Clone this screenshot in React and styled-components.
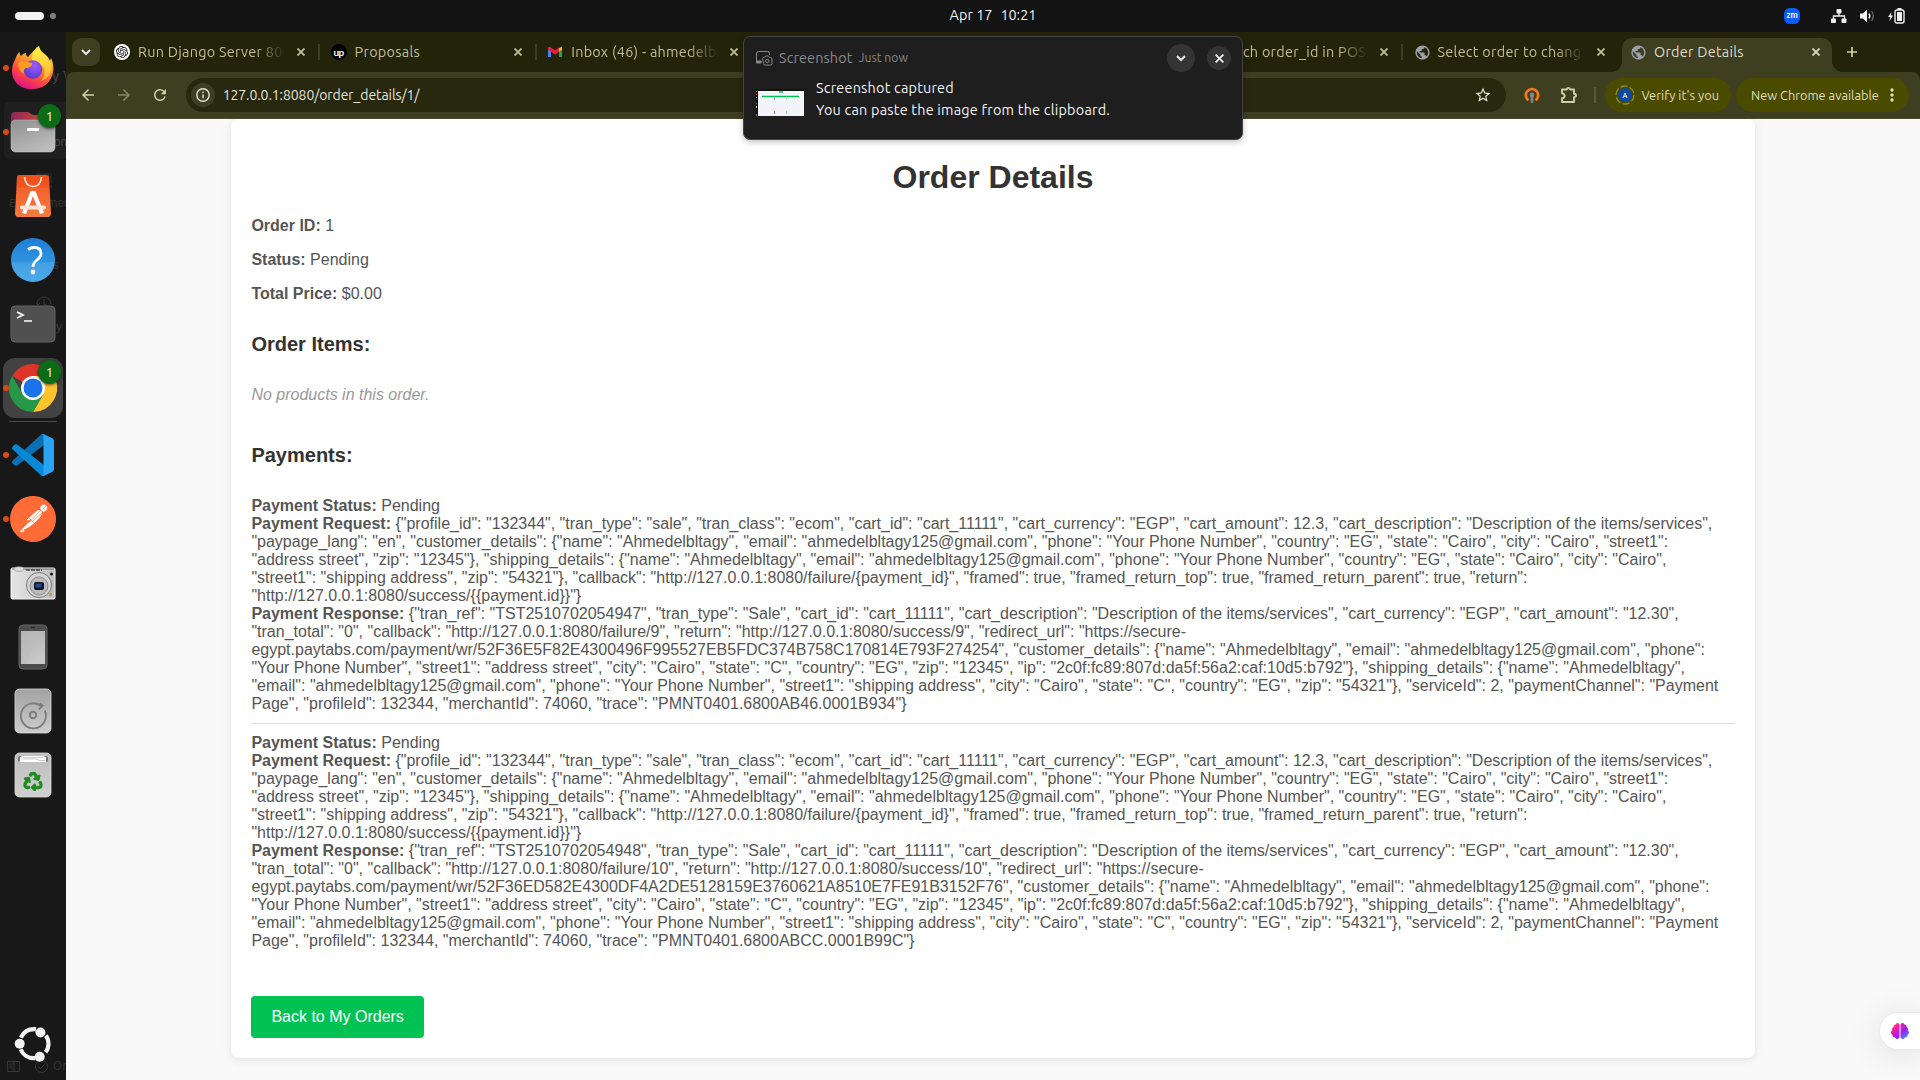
import React from 'react';
import styled, { createGlobalStyle, css } from 'styled-components';
import { MdPublic, MdStarBorder, MdArrowBack, MdArrowForward, MdRefresh } from 'react-icons/md';
import { SiOpenai, SiPostman } from 'react-icons/si';
import { FaRecycle, FaBrain } from 'react-icons/fa';

const uiFont = 'Ubuntu, "Noto Sans", "Open Sans", sans-serif';

const GlobalStyle = createGlobalStyle`
  * { box-sizing: border-box; }
  body { margin: 0; background: #131313; overflow: hidden; }
  svg { display: block; flex: none; }
`;

const Desktop = styled.div`
  position: relative;
  display: flex;
  flex-direction: column;
  width: 1920px;
  height: 1080px;
  overflow: hidden;
  font-family: ${uiFont};
`;

const Label = styled.span`
  white-space: pre;
  font-size: ${(p) => p.$size || 14.4}px;
  letter-spacing: ${(p) => p.$track || 0}px;
  line-height: 20px;
`;

/* ---------- top bar ---------- */
const TopBar = styled.header`
  display: grid;
  grid-template-columns: 1fr auto 1fr;
  align-items: center;
  height: 32px;
  flex: none;
  padding: 0 15px;
  background: #131313;
  color: #f2f2f2;
`;
const Workspaces = styled.div`
  display: flex;
  align-items: center;
  gap: 6px;
`;
const WorkspacePill = styled.span`
  width: ${(p) => (p.$active ? 29 : 6)}px;
  height: ${(p) => (p.$active ? 8 : 6)}px;
  border-radius: 4px;
  background: ${(p) => (p.$active ? '#f2f2f2' : '#808080')};
`;
const Clock = styled.div`
  display: flex;
  gap: 8px;
  margin-left: 66px;
  margin-top: -2px;
`;
const Tray = styled.div`
  display: flex;
  justify-content: flex-end;
  align-items: center;
  gap: 13px;
`;
const ZoomBadge = styled.span`
  display: grid;
  place-items: center;
  width: 16px;
  height: 16px;
  margin-right: 18px;
  border-radius: 6px;
  background: #0b5cff;
  color: #fff;
  font: 700 8.5px/1 Lato, sans-serif;
  padding-bottom: 1px;
`;

/* ---------- dock ---------- */
const Body = styled.div`
  display: flex;
  flex: 1;
  min-height: 0;
`;
const DockBar = styled.nav`
  position: relative;
  display: flex;
  flex-direction: column;
  width: 66px;
  flex: none;
  padding: 6px 0 2px;
  background: #181818;
  overflow: hidden;
`;
const DockItem = styled.div`
  position: relative;
  display: grid;
  place-items: center;
  width: 60px;
  height: 60px;
  margin: 0 3px 4px;
  flex: none;
  border-radius: 12px;
  ${(p) => p.$active && css`background: #424242;`}
`;
const RunDot = styled.i`
  position: absolute;
  left: 0;
  top: 27px;
  width: 6px;
  height: 6px;
  border-radius: 50%;
  background: #d64a17;
`;
const CountBadge = styled.span`
  position: absolute;
  left: 35px;
  top: 2px;
  display: grid;
  place-items: center;
  width: 23px;
  height: 24px;
  border-radius: 50%;
  background: #0d6b18;
  box-shadow: 0 1px 3px rgba(0, 0, 0, 0.6);
  color: #fff;
  font: 13px/1 ${uiFont};
`;
const DockRule = styled.hr`
  width: 48px;
  height: 1px;
  margin: -1px 0 3px 9px;
  border: 0;
  flex: none;
  background: #4a4a4a;
`;
const DockSpacer = styled.div`
  flex: 1;
`;
const Ghost = styled.span`
  position: absolute;
  left: ${(p) => p.$x}px;
  top: ${(p) => p.$y}px;
  color: ${(p) => p.$tone || '#333'};
  font: ${(p) => p.$size || 11}px/1.2 Inter, sans-serif;
  white-space: nowrap;
`;
const GhostPanel = styled.div`
  position: absolute;
  left: 4px;
  top: 70px;
  width: 66px;
  height: 57px;
  border-radius: 5px;
  background: #1f1f1f;
`;

/* ---------- browser ---------- */
const Browser = styled.main`
  display: flex;
  flex-direction: column;
  flex: 1;
  min-width: 0;
  background: #23230a;
`;
const TabStrip = styled.div`
  display: flex;
  height: 40px;
  flex: none;
  align-items: flex-end;
  padding-left: 6px;
`;
const TabSearch = styled.div`
  display: grid;
  place-items: center;
  width: 28px;
  height: 28px;
  margin: 0 4px 6px 0;
  border-radius: 9px;
  background: #3e3e21;
`;
const Tab = styled.div`
  position: relative;
  display: flex;
  align-items: center;
  width: ${(p) => (p.$active ? 210 : 216.6)}px;
  height: 34px;
  flex: none;
  margin-left: ${(p) => (p.$active ? 1.8 : 0)}px;
  padding: 0 0 6px ${(p) => (p.$active ? 8 : 10)}px;
  color: ${(p) => (p.$active ? '#dcdcc8' : '#bfbf96')};
  ${(p) =>
    p.$active &&
    css`
      background: #3e3e21;
      border-radius: 10px 10px 0 0;
      &::before,
      &::after {
        content: '';
        position: absolute;
        bottom: 0;
        width: 10px;
        height: 10px;
      }
      &::before {
        left: -10px;
        background: radial-gradient(circle at 0 0, transparent 9.5px, #3e3e21 10px);
      }
      &::after {
        right: -10px;
        background: radial-gradient(circle at 100% 0, transparent 9.5px, #3e3e21 10px);
      }
    `}
`;
const TabTitle = styled.div`
  width: 147px;
  margin-left: 8px;
  margin-right: ${(p) => (p.$tight ? 11 : 12)}px;
  overflow: hidden;
  display: flex;
  ${(p) => p.$fade && css`mask-image: linear-gradient(90deg, #000 118px, transparent 147px);`}
`;
const TabRule = styled.i`
  width: 2px;
  height: 16px;
  margin-left: 13px;
  background: #3e3e21;
`;
const FavIcon = styled.span`
  display: grid;
  place-items: center;
  width: 16px;
  height: 16px;
  flex: none;
  border-radius: 50%;
  background: ${(p) => p.$bg || 'transparent'};
  color: ${(p) => p.$fg || '#9aa0a6'};
  font: 700 10px/1 Lato, sans-serif;
  letter-spacing: -0.5px;
`;
const NewTab = styled.div`
  margin: 0 0 14px 14px;
`;
const Toolbar = styled.div`
  display: flex;
  align-items: center;
  height: 47px;
  flex: none;
  padding: 0 6px 1px 13px;
  border-radius: 8px 8px 0 0;
  border-bottom: 1px solid #4a4a31;
  background: #3e3e21;
  color: #cfcfa6;
`;
const NavButton = styled.span`
  display: grid;
  place-items: center;
  width: 36px;
  margin-left: ${(p) => p.$ml || 0}px;
  opacity: ${(p) => (p.$off ? 0.5 : 1)};
`;
const Omnibox = styled.div`
  display: flex;
  align-items: center;
  width: 1325px;
  height: 34px;
  margin-left: 8px;
  padding: 0 14px 0 5px;
  border-radius: 17px;
  background: #28280f;
  color: #e4e4da;
`;
const SiteInfo = styled.span`
  display: grid;
  place-items: center;
  width: 24px;
  height: 24px;
  margin-right: 8px;
  border-radius: 50%;
  background: #3e3e21;
`;
const Grow = styled.span`
  flex: 1;
`;
const ToolIcon = styled.span`
  margin-left: ${(p) => p.$ml}px;
`;
const ToolRule = styled.i`
  width: 2px;
  height: 16px;
  margin: 0 9px 0 16px;
  background: #5a5a38;
`;
const Chip = styled.div`
  display: flex;
  align-items: center;
  justify-content: space-between;
  width: ${(p) => p.$w}px;
  height: 34px;
  flex: none;
  padding: ${(p) => p.$pad};
  margin-right: 5px;
  border-radius: 17px;
  background: #4b4b00;
  color: #dedeba;
`;

/* ---------- web page ---------- */
const Page = styled.section`
  flex: 1;
  min-height: 0;
  padding: 0 165.4px;
  background: #f9f9f9;
  font-family: Arial, "Liberation Sans", sans-serif;
  font-size: 16px;
  color: #555;
`;
const Card = styled.article`
  height: 939px;
  padding: 20px;
  border-radius: 8px;
  background: #fff;
  box-shadow: 0 2px 10px rgba(0, 0, 0, 0.1);
`;
const Title = styled.h1`
  margin: 20px 0 21px;
  font-size: 32px;
  line-height: 37px;
  text-align: center;
  color: #333;
`;
const Heading = styled.h2`
  margin: 30px 0 20px;
  font-size: 20px;
  line-height: 23px;
  color: #333;
`;
const Field = styled.p`
  margin: 0 0 16px;
  line-height: 18px;
`;
const List = styled.ul`
  margin: 0;
  padding: 0;
  list-style: none;
  line-height: 18px;
`;
const Row = styled.li`
  padding: 10px 0;
  border-bottom: 1px solid #ddd;
  &:last-child { border-bottom: 0; }
`;
const Empty = styled(Row)`
  font-style: italic;
  color: #999;
`;
const BackButton = styled.a`
  display: inline-block;
  margin-top: 36px;
  padding: 12px 20px;
  border-radius: 4px;
  background: #00c253;
  color: #fff;
  line-height: 18px;
`;

/* ---------- overlays ---------- */
const Notification = styled.aside`
  position: absolute;
  left: 743px;
  top: 36px;
  width: 500px;
  height: 104px;
  padding: 7px 11px 0 12px;
  border: 1px solid #444;
  border-radius: 7px;
  background: #1e1e1e;
  box-shadow: 0 2px 6px rgba(0, 0, 0, 0.25);
  color: #f2f2f2;
`;
const NoteHeader = styled.div`
  display: flex;
  align-items: center;
  height: 28px;
  gap: 6px;
  color: #8a8a8a;
`;
const RoundButton = styled.span`
  display: grid;
  place-items: center;
  width: ${(p) => p.$d}px;
  height: ${(p) => p.$d}px;
  border-radius: 50%;
  background: #343434;
  color: #f2f2f2;
  margin-left: 6px;
`;
const NoteBody = styled.div`
  display: flex;
  gap: 12px;
  margin-top: 6px;
`;
const NoteText = styled.div`
  display: flex;
  flex-direction: column;
  gap: 2px;
`;
const Thumb = styled.div`
  margin-top: 11px;
`;
const Assistant = styled.div`
  position: absolute;
  right: 0;
  top: 1013px;
  display: flex;
  align-items: center;
  width: 40px;
  height: 36px;
  padding-left: 11px;
  border-radius: 18px 0 0 18px;
  background: #fff;
  box-shadow: 0 4px 34px rgba(0, 0, 0, 0.12), 0 0 2px rgba(0, 0, 0, 0.08);
`;

/* ---------- drawings ---------- */
const Close = ({ size = 8, w = 1.8 }) => (
  <svg width={size} height={size} viewBox="0 0 8 8" stroke="currentColor" strokeWidth={w} fill="none">
    <path d="M0.5 0.5 7.5 7.5M7.5 0.5 0.5 7.5" />
  </svg>
);
const Chevron = ({ size = 10 }) => (
  <svg width={size} height={size} viewBox="0 0 10 10" stroke="#e8e8e0" strokeWidth="2" fill="none">
    <path d="M1 3 5 7 9 3" />
  </svg>
);
const Puzzle = () => (
  <svg width="18" height="18" viewBox="0 0 18 18" fill="none" stroke="currentColor" strokeWidth="1.900" strokeLinejoin="round">
    <path d="M2 3.500h4.800q.2-1.600 1.600-1.600t1.600 1.600h4v4.200q2 .2 2 1.700t-2 1.700v4.900H2v-3.700q2.600-.3 2.600-2.400T2 7.300z" />
  </svg>
);
const Firefox = () => (
  <svg width="44" height="46" viewBox="0 0 44 46">
    <defs>
      <linearGradient id="ffBody" x1="0.8" y1="0" x2="0.3" y2="1">
        <stop offset="0" stopColor="#fff04a" />
        <stop offset="0.35" stopColor="#ffa62b" />
        <stop offset="0.68" stopColor="#ff4a3f" />
        <stop offset="1" stopColor="#e0108a" />
      </linearGradient>
      <radialGradient id="ffCore" cx="0.6" cy="0.3" r="0.8">
        <stop offset="0" stopColor="#a259ff" />
        <stop offset="1" stopColor="#4a36c9" />
      </radialGradient>
      <linearGradient id="ffFlame" x1="0.5" y1="0" x2="0.5" y2="1">
        <stop offset="0" stopColor="#fff44f" />
        <stop offset="1" stopColor="#ffb02e" />
      </linearGradient>
    </defs>
    <path d="M4 15c1-4 3-7 4.500-8 0 2 .5 3 1.500 4 2-2 3-3 5-3 0 2 .5 3 2 4l9-10c4 6 10 6 13 14l1-3c3 6 3 13 1 18-3 8-10 13-19 13C10 45 1 37 1 26c0-4 1-8 3-11z" fill="url(#ffBody)" />
    <path d="M28 1c-5 4-7 8-7 14l10 5c4 5 3 12-1 16 7-2 11-9 10-16-1-8-10-10-12-19z" fill="url(#ffFlame)" />
    <circle cx="22" cy="24.500" r="9.300" fill="url(#ffCore)" />
    <path d="M7 18c5-3 9-1 14 0 1 3-3 5-6 5-2 1-3 3-2 6-4-2-6-6-6-11z" fill="#ff9b22" />
    <path d="M25 15c4 0 7 3 8 7l-3-2c-1-2-3-4-5-5z" fill="#ffd23a" />
  </svg>
);
const Files = () => (
  <svg width="46" height="42" viewBox="0 0 46 42">
    <defs>
      <linearGradient id="fileTop"><stop stopColor="#8b2757" /><stop offset="1" stopColor="#e0512b" /></linearGradient>
      <linearGradient id="fileFront" x2="0.6" y2="1"><stop stopColor="#8f8f8f" /><stop offset="1" stopColor="#bcbcbc" /></linearGradient>
    </defs>
    <path d="M1 5q0-4 4-4h13l5 3h18q4 0 4 4v10H1z" fill="url(#fileTop)" />
    <rect x="1" y="9" width="44" height="32" rx="4.500" fill="url(#fileFront)" stroke="#c8c8c8" strokeWidth="0.500" />
    <rect x="17" y="17" width="12" height="3" rx="1.200" fill="#fff" />
  </svg>
);
const Store = () => (
  <svg width="38" height="44" viewBox="0 0 38 44">
    <defs><linearGradient id="bag" x2="0" y2="1"><stop stopColor="#f4511e" /><stop offset="0.3" stopColor="#f4622c" /><stop offset="1" stopColor="#f47b40" /></linearGradient></defs>
    <path d="M3 4q0-3 3-3h26q3 0 3 3l2 35q0 4-3 4H4q-3 0-3-4z" fill="url(#bag)" />
    <path d="M3 1.500h32l.5 12h-33z" fill="#ef4d17" opacity="0.600" />
    <path d="M10.500 3q1 9.500 8.500 9.500T27.500 3" fill="none" stroke="#ffe9df" strokeWidth="1.700" />
    <path d="M10 39.500 18 19h2l8 20.500" fill="none" stroke="#fff" strokeWidth="4.200" />
    <path d="M8 33.500h22" stroke="#ffe3d6" strokeWidth="4" strokeLinecap="round" />
  </svg>
);
const Help = () => (
  <svg width="46" height="46" viewBox="0 0 46 46">
    <defs><linearGradient id="help" x2="0" y2="1"><stop stopColor="#1c7ed6" /><stop offset="0.55" stopColor="#2f94df" /><stop offset="0.56" stopColor="#429fe2" /><stop offset="1" stopColor="#4fabe8" /></linearGradient></defs>
    <circle cx="23" cy="23" r="22" fill="url(#help)" />
    <path d="M18 12.500q3-2 6-2 7 0 7 6 0 3.500-4 6.500-4 3-4 7" fill="none" stroke="#fff" strokeWidth="2.800" />
    <circle cx="23" cy="35" r="2.400" fill="#fff" />
  </svg>
);
const Terminal = () => (
  <svg width="46" height="38" viewBox="0 0 46 38">
    <rect x="1" y="1" width="44" height="36" rx="4" fill="#505050" stroke="#626262" />
    <path d="M7 7l6 3-6 3" fill="none" stroke="#fff" strokeWidth="1.700" />
    <path d="M14 16h8" stroke="#fff" strokeWidth="1.500" />
  </svg>
);
const ChromeLogo = () => (
  <svg width="48" height="48" viewBox="0 0 48 48">
    <path d="M24 12h20.800A24 24 0 0 1 24 48l10.400-18z" fill="#fcc32c" />
    <path d="M3.200 12A24 24 0 0 1 44.800 12H24L13.600 18z" fill="#e0342a" />
    <path d="M3.200 12 13.600 30 24 36l10.400-6L24 48A24 24 0 0 1 3.200 12z" fill="#279847" />
    <circle cx="24" cy="24" r="12" fill="#fff" />
    <circle cx="24" cy="24" r="9.500" fill="#1a73e8" />
  </svg>
);
const VsCode = () => (
  <svg width="42" height="42" viewBox="0 0 100 100">
    <path d="M96.460 10.800 75.860.880C73.470-.270 70.620.210 68.750 2.080L1.300 63.580c-1.810 1.650-1.810 4.510 0 6.170l5.510 5c1.490 1.350 3.720 1.450 5.320.240L93.360 13.370C96.090 11.300 100 13.250 100 16.670z" fill="#0b6fb3" />
    <path d="M96.460 89.200 75.860 99.120c-2.390 1.150-5.240.670-7.110-1.200L1.300 36.420c-1.810-1.660-1.810-4.520 0-6.170l5.510-5c1.490-1.350 3.720-1.450 5.320-.240l81.230 61.620c2.730 2.070 6.640.120 6.640-3.300z" fill="#0a88d8" />
    <path d="M75.860 99.130c-2.390 1.140-5.240.660-7.110-1.210 2.310 2.300 6.250.670 6.250-2.590V4.670c0-3.260-3.940-4.890-6.250-2.590 1.870-1.870 4.720-2.360 7.110-1.210l20.600 9.910c2.160 1.040 3.540 3.230 3.540 5.630v67.180c0 2.400-1.380 4.590-3.540 5.630z" fill="#27a5f4" />
  </svg>
);
const PostmanWrap = styled.span`
  display: grid;
  place-items: center;
  width: 46px;
  height: 46px;
  border-radius: 50%;
  background: radial-gradient(circle, #fff 60%, transparent 61%);
`;
const Camera = () => (
  <svg width="46" height="34" viewBox="0 0 46 34">
    <defs><linearGradient id="cam"><stop stopColor="#e6e6e6" /><stop offset="1" stopColor="#bdbdbd" /></linearGradient></defs>
    <rect x="1" y="2" width="44" height="31" rx="1.500" fill="url(#cam)" stroke="#f5f5f5" />
    <path d="M2 3h42" stroke="#777" />
    <ellipse cx="9" cy="3" rx="5" ry="2.300" fill="#ddd" stroke="#888" strokeWidth="0.600" />
    <path d="M16 4h16" stroke="#444" strokeWidth="1.500" strokeDasharray="4 1" />
    <circle cx="29" cy="19" r="12.500" fill="#d6d6d6" stroke="#777" />
    <circle cx="29" cy="20" r="9" fill="#bbb" stroke="#888" />
    <rect x="24" y="16" width="10" height="8" rx="2" fill="#0b1220" />
    <rect x="25.500" y="17.500" width="6" height="4" fill="#1f4c8f" />
    <circle cx="41.500" cy="8" r="1.600" fill="#222" />
    <rect x="39" y="27" width="3" height="3" fill="#e6951e" />
  </svg>
);
const Phone = () => (
  <svg width="30" height="46" viewBox="0 0 30 46">
    <defs><linearGradient id="screen" x2="0.4" y2="1"><stop stopColor="#b0b0b0" /><stop offset="1" stopColor="#c8c8c8" /></linearGradient></defs>
    <rect x="1" y="1" width="28" height="44" rx="4" fill="#4c4c4c" stroke="#666" />
    <rect x="3" y="7" width="24" height="33" fill="url(#screen)" />
    <path d="M22 7 8 40H3V7z" fill="#bcbcbc" opacity="0.500" />
    <path d="M13 3.500h4" stroke="#222" />
  </svg>
);
const Disk = () => (
  <svg width="38" height="46" viewBox="0 0 38 46">
    <defs><linearGradient id="disk" x2="0" y2="1"><stop stopColor="#a2a2a2" /><stop offset="1" stopColor="#cdcdcd" /></linearGradient></defs>
    <rect x="1" y="1" width="36" height="44" rx="4.500" fill="url(#disk)" stroke="#dadada" strokeWidth="0.800" />
    <path d="M27.500 18.300A12.500 12.500 0 1 0 30.700 22.500M24.800 21.300l4-3.800-3-2.200" fill="none" stroke="#7c7c7c" strokeWidth="1.800" />
    <circle cx="19" cy="27" r="3.200" fill="none" stroke="#7c7c7c" strokeWidth="1.900" />
  </svg>
);
const Trash = () => (
  <svg width="38" height="46" viewBox="0 0 38 46">
    <defs><linearGradient id="bin" x2="0" y2="1"><stop stopColor="#bdbdbd" /><stop offset="1" stopColor="#d0d0d0" /></linearGradient></defs>
    <rect x="1" y="1" width="36" height="44" rx="4.500" fill="url(#bin)" stroke="#dadada" strokeWidth="0.800" />
    <path d="M4 9.500V6q0-2 2-2h26q2 0 2 2v3.500z" fill="#777" />
    <path d="M6 10V5l3-1h20l3 1v5z" fill="#fff" />
    <path d="M8 7h14l4 1.500h6M9 5.500h20" fill="none" stroke="#aaa" strokeWidth="0.600" />
    <FaRecycle x="9.500" y="20" size="19" color="#1f8a1f" strokeWidth="28" />
  </svg>
);
const UbuntuLogo = () => (
  <svg width="38" height="38" viewBox="0 0 38 38" fill="#f2f2f2">
    <circle cx="20" cy="18.700" r="14.500" fill="none" stroke="#f2f2f2" strokeWidth="4.200" strokeDasharray="18.500 11.870" strokeDashoffset="9.250" />
    <circle cx="5.700" cy="18.700" r="5" />
    <circle cx="26.500" cy="7.500" r="5" />
    <circle cx="25.700" cy="31.700" r="5" />
  </svg>
);
const Gmail = () => (
  <svg width="16" height="12" viewBox="0 0 16 12">
    <path d="M1 1.500V11h3V5z" fill="#4285f4" />
    <path d="M15 1.500V11h-3V5z" fill="#22a352" />
    <path d="M12 2.200 15 .6V3.500l-3 2.300z" fill="#fbbc04" />
    <path d="M1 1.200Q2.500 0 4 1.500l4 3 4-3v4.300l-4 3-4-3-3-2.300z" fill="#ea2035" />
  </svg>
);
const InfoIcon = () => (
  <svg width="14" height="14" viewBox="0 0 14 14" fill="none" stroke="currentColor" strokeWidth="1.400">
    <circle cx="7" cy="7" r="6.200" />
    <path d="M7 6.300v4M7 3.600v1.500" />
  </svg>
);
const VpnIcon = () => (
  <svg width="16" height="16" viewBox="0 0 16 16">
    <path d="M4.500 13.300A6.200 6.200 0 1 1 11.500 13.300" fill="none" stroke="#f47a1c" strokeWidth="2.700" />
    <circle cx="8" cy="8" r="2.400" fill="#858585" />
    <path d="M8 8v8" stroke="#858585" strokeWidth="2.600" />
  </svg>
);
const ProfileIcon = () => (
  <svg width="20" height="20" viewBox="0 0 20 20">
    <circle cx="10" cy="10" r="9" fill="none" stroke="#8c8c35" strokeWidth="1.300" strokeDasharray="7 2.400" />
    <circle cx="10" cy="10" r="7" fill="#0b4a9e" />
    <text x="10" y="12.700" textAnchor="middle" fontSize="7.500" fill="#fff" fontFamily="Noto Sans, sans-serif">A</text>
  </svg>
);
const Dots = () => (
  <svg width="4" height="14" viewBox="0 0 4 14" fill="currentColor">
    <circle cx="2" cy="2" r="1.700" /><circle cx="2" cy="7" r="1.700" /><circle cx="2" cy="12" r="1.700" />
  </svg>
);
const Network = () => (
  <svg width="16" height="14" viewBox="0 0 16 14" fill="#f2f2f2">
    <rect x="5.500" y="0" width="5" height="4.500" rx="1" /><rect x="0" y="9.500" width="5" height="4.500" rx="1" /><rect x="10.500" y="9.500" width="5" height="4.500" rx="1" />
    <path d="M8 4v3M2.500 10V7h11v3" fill="none" stroke="#f2f2f2" strokeWidth="1.300" />
  </svg>
);
const Volume = () => (
  <svg width="15" height="14" viewBox="0 0 15 14">
    <path d="M0 4.500h3L7 .5v13L3 9.500H0z" fill="#f2f2f2" />
    <path d="M8.800 4.500q2 2.500 0 5" fill="none" stroke="#f2f2f2" strokeWidth="1.400" />
    <path d="M11.500 2q3.500 5 0 10" fill="none" stroke="#6a6a6a" strokeWidth="1.300" />
  </svg>
);
const Battery = () => (
  <svg width="17" height="16" viewBox="0 0 17 16">
    <path d="M3.500 4 0 9h2.200L1.500 13 5 7.500H2.800z" fill="#f2f2f2" />
    <rect x="7" y="2" width="9" height="13" rx="2" fill="none" stroke="#f2f2f2" strokeWidth="1.400" />
    <rect x="9" y="4" width="5" height="9" fill="#f2f2f2" /><rect x="9.500" y="0" width="4" height="2" fill="#f2f2f2" />
  </svg>
);
const ShotIcon = () => (
  <svg width="17" height="15" viewBox="0 0 17 15" fill="none" stroke="#8a8a8a">
    <path d="M5 11.500H.500V2.500q0-2 2-2h9q2 0 2 2V4" />
    <path d="M.5 10h4.500v2H.500z" fill="#8a8a8a" />
    <path d="M6.500 7.500q0-1 1-1h1l1-1.500h3l1 1.500h1q1.500 0 1.500 1.500v4.500q0 1.500-1.500 1.500h-6q-1 0-1-1.500z" fill="#1e1e1e" />
    <circle cx="11.300" cy="10" r="1.700" />
  </svg>
);
const ShotThumb = () => (
  <svg width="48" height="27" viewBox="0 0 48 27">
    <rect width="48" height="3" fill="#15150a" />
    <rect x="2" y="2" width="46" height="25" fill="#f3f3fa" />
    <rect width="2" height="27" fill="#111" />
    <path d="M.5 2v1M.500 5v1M.500 14v1" stroke="#e0522b" />
    <path d="M.5 8v1M.500 17v2M.500 25.500v1" stroke="#ccc" />
    <path d="M23 3h4M6 7.500h37" stroke="#00c253" strokeWidth="1.400" />
    <path d="M18.500 9v1.500M18.500 22v3" stroke="#999" /><path d="M30.500 9v1.500M30.500 22v3" stroke="#93dfb0" />
  </svg>
);
const Brain = () => (
  <>
    <svg width="0" height="0">
      <defs>
        <linearGradient id="brainFill" x1="0" y1="0" x2="1" y2="1">
          <stop offset="0" stopColor="#ff9a2e" /><stop offset="0.25" stopColor="#ff1f9c" />
          <stop offset="0.6" stopColor="#9a1ff0" /><stop offset="1" stopColor="#22b4ff" />
        </linearGradient>
      </defs>
    </svg>
    <FaBrain size={18} fill="url(#brainFill)" />
  </>
);

/* ---------- data ---------- */
const customer = '"Ahmedelbltagy", "email": "ahmedelbltagy125@gmail.com", "phone": "Your Phone Number"';
const request =
  `{"profile_id": "132344", "tran_type": "sale", "tran_class": "ecom", "cart_id": "cart_11111", "cart_currency": "EGP", "cart_amount": 12.3, "cart_description": "Description of the items/services", "paypage_lang": "en", "customer_details": {"name": ${customer}, "country": "EG", "state": "Cairo", "city": "Cairo", "street1": "address street", "zip": "12345"}, "shipping_details": {"name": ${customer}, "country": "EG", "state": "Cairo", "city": "Cairo", "street1": "shipping address", "zip": "54321"}, "callback": "http://127.0.0.1:8080/failure/{payment_id}", "framed": true, "framed_return_top": true, "framed_return_parent": true, "return": "http://127.0.0.1:8080/success/{{payment.id}}"}`;
const response = ({ ref, id, token, trace }) =>
  `{"tran_ref": "${ref}", "tran_type": "Sale", "cart_id": "cart_11111", "cart_description": "Description of the items/services", "cart_currency": "EGP", "cart_amount": "12.30", "tran_total": "0", "callback": "http://127.0.0.1:8080/failure/${id}", "return": "http://127.0.0.1:8080/success/${id}", "redirect_url": "https://secure-egypt.paytabs.com/payment/wr/${token}", "customer_details": {"name": ${customer}, "street1": "address street", "city": "Cairo", "state": "C", "country": "EG", "zip": "12345", "ip": "2c0f:fc89:807d:da5f:56a2:caf:10d5:b792"}, "shipping_details": {"name": ${customer}, "street1": "shipping address", "city": "Cairo", "state": "C", "country": "EG", "zip": "54321"}, "serviceId": 2, "paymentChannel": "Payment Page", "profileId": 132344, "merchantId": 74060, "trace": "${trace}"}`;
const payments = [
  { ref: 'TST2510702054947', id: 9, token: '52F36E5F82E4300496F995527EB5FDC374B758C170814E793F274254', trace: 'PMNT0401.6800AB46.0001B934' },
  { ref: 'TST2510702054948', id: 10, token: '52F36ED582E4300DF4A2DE5128159E3760621A8510E7FE91B3152F76', trace: 'PMNT0401.6800ABCC.0001B99C' },
];
const globe = <FavIcon><MdPublic size={17} /></FavIcon>;
const tabs = [
  { title: 'Run Django Server 80', fade: true, icon: <FavIcon $bg="#fff" $fg="#111"><SiOpenai size={12} /></FavIcon> },
  { title: 'Proposals', icon: <FavIcon $bg="#000" $fg="#fff">up</FavIcon> },
  { title: 'Inbox (46) - ahmedelb', fade: true, icon: <FavIcon><Gmail /></FavIcon> },
  {},
  {},
  { title: 'Fetch order_id in POS', fade: true, icon: globe },
  { title: 'Select order to chang', fade: true, icon: globe, last: true },
];
const dock = [
  { icon: <Firefox />, running: true },
  { icon: <Files />, running: true, count: 1 },
  { icon: <Store /> },
  { icon: <Help /> },
  { icon: <Terminal /> },
  { icon: <ChromeLogo />, running: true, count: 1, active: true },
  { rule: true },
  { icon: <VsCode />, running: true },
  { icon: <PostmanWrap><SiPostman size={46} color="#ff6c37" /></PostmanWrap>, running: true },
  { icon: <Camera /> },
  { icon: <Phone /> },
  { icon: <Disk /> },
  { icon: <Trash /> },
];

export default function App() {
  return (
    <Desktop>
      <GlobalStyle />
      <TopBar>
        <Workspaces><WorkspacePill $active /><WorkspacePill /></Workspaces>
        <Clock><Label>Apr 17</Label><Label>10:21</Label></Clock>
        <Tray><ZoomBadge>zm</ZoomBadge><Network /><Volume /><Battery /></Tray>
      </TopBar>
      <Body>
        <DockBar>
          <GhostPanel />
          <Ghost $x={52} $y={37} $size={13} $tone="#444">y V</Ghost>
          <Ghost $x={54} $y={104} $tone="#484848">on</Ghost>
          <Ghost $x={9} $y={165}>Environmen</Ghost>
          <Ghost $x={53} $y={227}>s</Ghost>
          <Ghost $x={56} $y={289} $tone="#444">y</Ghost>
          <Ghost $x={53} $y={1027} $size={12}>Or</Ghost>
          <Ghost $x={7} $y={1028}>
            <svg width="42" height="13" viewBox="0 0 42 13" fill="none" stroke="#383838">
              <path d="M.5 1.500h12v10H.500zM7 1.500v10M2.500 4h3M2.500 6h3M2.500 8h3" />
              <circle cx="34.500" cy="6.500" r="6" /><path d="M31.500 6.500l2 2 4-4" />
            </svg>
          </Ghost>
          <Ghost $x={36} $y={141}>
            <svg width="16" height="16" viewBox="0 0 16 16" fill="none" stroke="#303030"><path d="M1 10V1h14v9M15 12v3" /></svg>
          </Ghost>
          <Ghost $x={36} $y={264}>
            <svg width="16" height="16" viewBox="0 0 16 16" fill="none" stroke="#3c3c3c"><path d="M1 8a7 7 0 1 1 14 0M8 3v5l3 2M0 7l2 2 2-2" /></svg>
          </Ghost>
          {dock.map((d, i) =>
            d.rule ? (
              <DockRule key={i} />
            ) : (
              <DockItem key={i} $active={d.active}>
                {d.running && <RunDot />}
                {d.icon}
                {d.count && <CountBadge>{d.count}</CountBadge>}
              </DockItem>
            )
          )}
          <DockSpacer />
          <DockItem><UbuntuLogo /></DockItem>
        </DockBar>
        <Browser>
          <TabStrip>
            <TabSearch><Chevron /></TabSearch>
            {tabs.map((t, i) => (
              <Tab key={i}>
                {t.title && (
                  <>
                    {t.icon}
                    <TabTitle $fade={t.fade}><Label $track={0.27}>{t.title}</Label></TabTitle>
                    <Close />
                    {!t.last && <TabRule />}
                  </>
                )}
              </Tab>
            ))}
            <Tab $active>
              {globe}
              <TabTitle $tight><Label $track={0.27}>Order Details</Label></TabTitle>
              <Close />
            </Tab>
            <NewTab>
              <svg width="12" height="12" viewBox="0 0 12 12" stroke="#cfcfa6" strokeWidth="1.700"><path d="M6 1v10M1 6h10" /></svg>
            </NewTab>
          </TabStrip>
          <Toolbar>
            <NavButton $ml={-9}><MdArrowBack size={18} /></NavButton>
            <NavButton $off><MdArrowForward size={18} /></NavButton>
            <NavButton><MdRefresh size={18} /></NavButton>
            <Omnibox>
              <SiteInfo><InfoIcon /></SiteInfo>
              <Label $size={14} $track={-0.08}>127.0.0.1:8080/order_details/1/</Label>
              <Grow />
              <MdStarBorder size={18} />
            </Omnibox>
            <ToolIcon $ml={18}><VpnIcon /></ToolIcon>
            <ToolIcon $ml={20}><Puzzle /></ToolIcon>
            <ToolRule />
            <Chip $w={126} $pad="0 12px 0 10px"><ProfileIcon /><Label $size={12.8}>Verify it's you</Label></Chip>
            <Chip $w={173} $pad="0 15px"><Label $size={12.8}>New Chrome available</Label><Dots /></Chip>
          </Toolbar>
          <Page>
            <Card>
              <Title>Order Details</Title>
              <Field><b>Order ID:</b> 1</Field>
              <Field><b>Status:</b> Pending</Field>
              <Field><b>Total Price:</b> $0.00</Field>
              <Heading>Order Items:</Heading>
              <List><Empty>No products in this order.</Empty></List>
              <Heading>Payments:</Heading>
              <List>
                {payments.map((p) => (
                  <Row key={p.ref}>
                    <b>Payment Status:</b> Pending<br />
                    <b>Payment Request:</b> {request}<br />
                    <b>Payment Response:</b> {response(p)}
                  </Row>
                ))}
              </List>
              <BackButton>Back to My Orders</BackButton>
            </Card>
          </Page>
        </Browser>
      </Body>
      <Notification>
        <NoteHeader>
          <ShotIcon />
          <Label $track={0.12}>Screenshot</Label>
          <Label $size={12.2}>Just now</Label>
          <Grow />
          <RoundButton $d={28}><Chevron /></RoundButton>
          <RoundButton $d={24}><Close size={9} w={1.5} /></RoundButton>
        </NoteHeader>
        <NoteBody>
          <Thumb><ShotThumb /></Thumb>
          <NoteText>
            <Label $track={0.22}>Screenshot captured</Label>
            <Label $track={0.23}>You can paste the image from the clipboard.</Label>
          </NoteText>
        </NoteBody>
      </Notification>
      <Assistant><Brain /></Assistant>
    </Desktop>
  );
}
